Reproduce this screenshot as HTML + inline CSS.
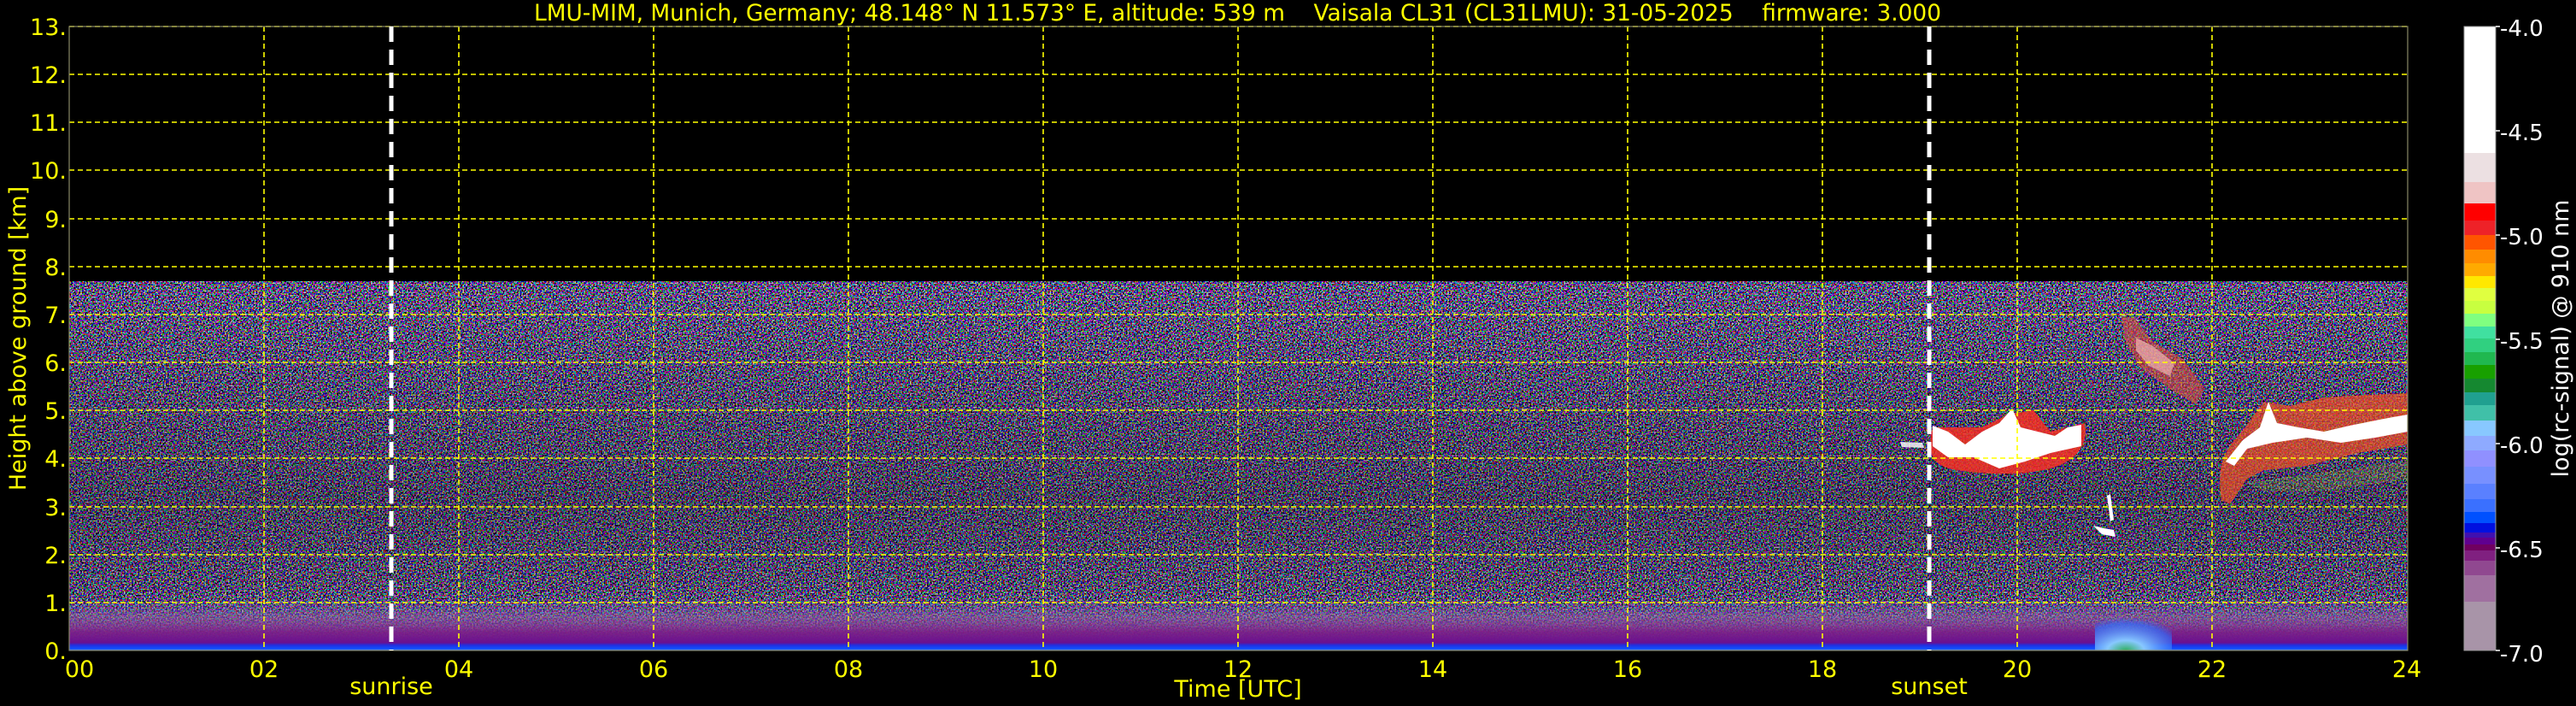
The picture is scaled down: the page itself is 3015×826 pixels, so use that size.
<!DOCTYPE html>
<html><head><meta charset="utf-8"><style>
html,body{margin:0;padding:0;background:#000;width:3015px;height:826px;overflow:hidden}
svg{display:block}
text{font-family:"DejaVu Sans","Liberation Sans",sans-serif}
</style></head><body>
<svg width="3015" height="826" viewBox="0 0 3015 826" xmlns="http://www.w3.org/2000/svg">
<defs>
<filter id="nz" x="81" y="329" width="2737" height="432" filterUnits="userSpaceOnUse" primitiveUnits="userSpaceOnUse">
<feTurbulence type="fractalNoise" baseFrequency="0.55" numOctaves="1" seed="7" result="t"/>
<feColorMatrix in="t" type="matrix" values="9 0 0 0 -4.3  0 9 0 0 -4.4  0 0 9 0 -3.9  0 0 0 0 1"/>
</filter>
<linearGradient id="dk" x1="0" y1="0" x2="0" y2="1">
<stop offset="0" stop-color="#000" stop-opacity="0.2"/>
<stop offset="0.3" stop-color="#000" stop-opacity="0.3"/>
<stop offset="0.6" stop-color="#000" stop-opacity="0.4"/>
<stop offset="0.82" stop-color="#000" stop-opacity="0.3"/>
<stop offset="1" stop-color="#000" stop-opacity="0.1"/>
</linearGradient>
<linearGradient id="bl" x1="0" y1="0" x2="0" y2="1">
<stop offset="0" stop-color="#6a50b0" stop-opacity="0"/>
<stop offset="0.35" stop-color="#8a5aa0" stop-opacity="0.6"/>
<stop offset="0.65" stop-color="#7a2088" stop-opacity="0.95"/>
<stop offset="0.85" stop-color="#6a1090" stop-opacity="1"/>
<stop offset="0.9" stop-color="#2030e0" stop-opacity="1"/>
<stop offset="0.97" stop-color="#1050ff" stop-opacity="1"/>
<stop offset="1" stop-color="#6090ff" stop-opacity="1"/>
</linearGradient>
<radialGradient id="pl" cx="0.4" cy="1" r="0.8">
<stop offset="0" stop-color="#30b060"/>
<stop offset="0.3" stop-color="#88c8ff"/>
<stop offset="0.8" stop-color="#3070ff" stop-opacity="0.7"/>
<stop offset="1" stop-color="#3070ff" stop-opacity="0"/>
</radialGradient>
</defs>

<rect x="81" y="329" width="2737" height="432" filter="url(#nz)"/>
<rect x="81" y="329" width="2737" height="432" fill="url(#dk)"/>
<rect x="81" y="700" width="2737" height="61" fill="url(#bl)"/>
<rect x="2452" y="712" width="90" height="49" fill="url(#pl)"/>

<g>
<path d="M2483,370 L2498,372 L2520,400 L2555,420 L2580,455 L2570,473 L2540,455 L2505,430 L2488,400 Z" fill="#e05040" opacity="0.55"/>
<path d="M2500,395 L2520,405 L2545,425 L2540,440 L2515,428 L2500,410 Z" fill="#f0b0b0" opacity="0.7"/>
<path d="M2262,500 C2255,530 2260,545 2290,550 C2330,556 2370,556 2400,548 C2430,540 2445,520 2440,495 L2400,505 L2380,480 L2350,485 L2320,500 L2290,500 Z" fill="#ff3020" opacity="0.8"/>
<path d="M2262,498 L2280,505 L2300,520 L2320,505 L2340,495 L2355,478 L2365,500 L2385,505 L2405,510 L2420,500 L2436,497 L2436,522 L2400,530 L2370,540 L2340,548 L2310,535 L2280,535 L2262,522 Z" fill="#fff"/>
<path d="M2600,585 C2595,550 2600,530 2620,510 L2650,470 L2680,475 L2720,465 L2770,462 L2818,460 L2818,520 L2760,530 L2700,545 L2650,550 L2630,560 L2610,590 Z" fill="#ff5020" opacity="0.65"/>
<path d="M2605,540 L2625,515 L2645,500 L2655,470 L2665,495 L2690,500 L2720,505 L2750,498 L2790,490 L2818,485 L2818,505 L2780,512 L2740,518 L2700,512 L2660,518 L2630,525 L2615,545 Z" fill="#fff"/>
<path d="M2630,565 L2700,555 L2818,540 L2818,560 L2720,575 L2650,575 Z" fill="#a0c040" opacity="0.2"/>
<path d="M2450,615 L2460,625 L2476,628 L2474,620 L2462,618 Z" fill="#fff"/>
<path d="M2466,580 L2470,610 L2474,608 L2470,578 Z" fill="#fff"/>
<path d="M2224,517 L2250,518 L2252,524 L2226,523 Z" fill="#fff" opacity="0.8"/>
</g>

<g stroke="#ffff00" stroke-width="1.6" stroke-dasharray="6,4" fill="none">
<path d="M81,31H2818M81,87H2818M81,143H2818M81,199H2818M81,256H2818M81,312H2818M81,368H2818M81,424H2818M81,480H2818M81,536H2818M81,593H2818M81,649H2818M81,705H2818"/>
<path d="M309,31V761M537,31V761M765,31V761M993,31V761M1221,31V761M1449,31V761M1677,31V761M1905,31V761M2133,31V761M2361,31V761M2589,31V761"/>
</g>
<rect x="81" y="31" width="2737" height="730" fill="none" stroke="#888866" stroke-width="1.2"/>

<g stroke="#fff" stroke-width="5" stroke-dasharray="18,9">
<path d="M458,31V761"/><path d="M2258,31V761"/>
</g>

<g fill="#ffff00" font-size="27" text-anchor="end">
<text x="78" y="41">13.</text><text x="78" y="97">12.</text><text x="78" y="153">11.</text><text x="78" y="209">10.</text>
<text x="78" y="266">9.</text><text x="78" y="322">8.</text><text x="78" y="378">7.</text><text x="78" y="434">6.</text>
<text x="78" y="490">5.</text><text x="78" y="546">4.</text><text x="78" y="603">3.</text><text x="78" y="659">2.</text>
<text x="78" y="715">1.</text><text x="78" y="771">0.</text>
</g>
<g fill="#ffff00" font-size="27" text-anchor="middle">
<text x="93" y="792">00</text><text x="309" y="792">02</text><text x="537" y="792">04</text><text x="765" y="792">06</text>
<text x="993" y="792">08</text><text x="1221" y="792">10</text><text x="1449" y="792">12</text><text x="1677" y="792">14</text>
<text x="1905" y="792">16</text><text x="2133" y="792">18</text><text x="2361" y="792">20</text><text x="2589" y="792">22</text>
<text x="2817" y="792">24</text>
<text x="458" y="812">sunrise</text>
<text x="1449" y="815">Time [UTC]</text>
<text x="2258" y="812">sunset</text>
</g>
<text x="30" y="396" fill="#ffff00" font-size="27" text-anchor="middle" transform="rotate(-90 30 396)">Height above ground [km]</text>
<text x="625" y="24" fill="#ffff00" font-size="27" textLength="1647" lengthAdjust="spacingAndGlyphs" xml:space="preserve">LMU-MIM, Munich, Germany; 48.148° N 11.573° E, altitude: 539 m    Vaisala CL31 (CL31LMU): 31-05-2025    firmware: 3.000</text>

<g>
<rect x="2884" y="31" width="37" height="148" fill="#fff"/>
<rect x="2884" y="179" width="37" height="34" fill="#ece0e2"/>
<rect x="2884" y="213" width="37" height="25" fill="#efc4c4"/>
<rect x="2884" y="238" width="37" height="20" fill="#ff0000"/>
<rect x="2884" y="258" width="37" height="17" fill="#ee2228"/>
<rect x="2884" y="275" width="37" height="17" fill="#ff5500"/>
<rect x="2884" y="292" width="37" height="16" fill="#ff8c00"/>
<rect x="2884" y="308" width="37" height="15" fill="#ffaa00"/>
<rect x="2884" y="323" width="37" height="14" fill="#ffe800"/>
<rect x="2884" y="337" width="37" height="15" fill="#e0ff40"/>
<rect x="2884" y="352" width="37" height="15" fill="#c8ff40"/>
<rect x="2884" y="367" width="37" height="15" fill="#80ff80"/>
<rect x="2884" y="382" width="37" height="14" fill="#40e0a0"/>
<rect x="2884" y="396" width="37" height="16" fill="#30d080"/>
<rect x="2884" y="412" width="37" height="15" fill="#20b850"/>
<rect x="2884" y="427" width="37" height="16" fill="#18a000"/>
<rect x="2884" y="443" width="37" height="16" fill="#158830"/>
<rect x="2884" y="459" width="37" height="15" fill="#20a090"/>
<rect x="2884" y="474" width="37" height="18" fill="#40c0a8"/>
<rect x="2884" y="492" width="37" height="18" fill="#88c8ff"/>
<rect x="2884" y="510" width="37" height="17" fill="#8eaaff"/>
<rect x="2884" y="527" width="37" height="19" fill="#9090ff"/>
<rect x="2884" y="546" width="37" height="20" fill="#7890ff"/>
<rect x="2884" y="566" width="37" height="18" fill="#5a80ff"/>
<rect x="2884" y="584" width="37" height="15" fill="#3a70ff"/>
<rect x="2884" y="599" width="37" height="13" fill="#0050ff"/>
<rect x="2884" y="612" width="37" height="11" fill="#0010e0"/>
<rect x="2884" y="623" width="37" height="6" fill="#4010b0"/>
<rect x="2884" y="629" width="37" height="8" fill="#600090"/>
<rect x="2884" y="637" width="37" height="7" fill="#700060"/>
<rect x="2884" y="644" width="37" height="12" fill="#802080"/>
<rect x="2884" y="656" width="37" height="17" fill="#904890"/>
<rect x="2884" y="673" width="37" height="31" fill="#a070a0"/>
<rect x="2884" y="704" width="37" height="57" fill="#a894a8"/>
<rect x="2884" y="31" width="37" height="730" fill="none" stroke="#999" stroke-width="1"/>
</g>
<g fill="#fff" font-size="26">
<text x="2926" y="42">-4.0</text><text x="2926" y="164">-4.5</text><text x="2926" y="286">-5.0</text>
<text x="2926" y="408">-5.5</text><text x="2926" y="530">-6.0</text><text x="2926" y="652">-6.5</text>
<text x="2926" y="774">-7.0</text>
</g>
<g stroke="#fff" stroke-width="1.5"><path d="M2921,31h5M2921,153h5M2921,275h5M2921,397h5M2921,519h5M2921,641h5M2921,761h5"/></g>
<text x="3006" y="396" fill="#fff" font-size="27" text-anchor="middle" transform="rotate(-90 3006 396)">log(rc-signal) @ 910 nm</text>
</svg>
</body></html>
